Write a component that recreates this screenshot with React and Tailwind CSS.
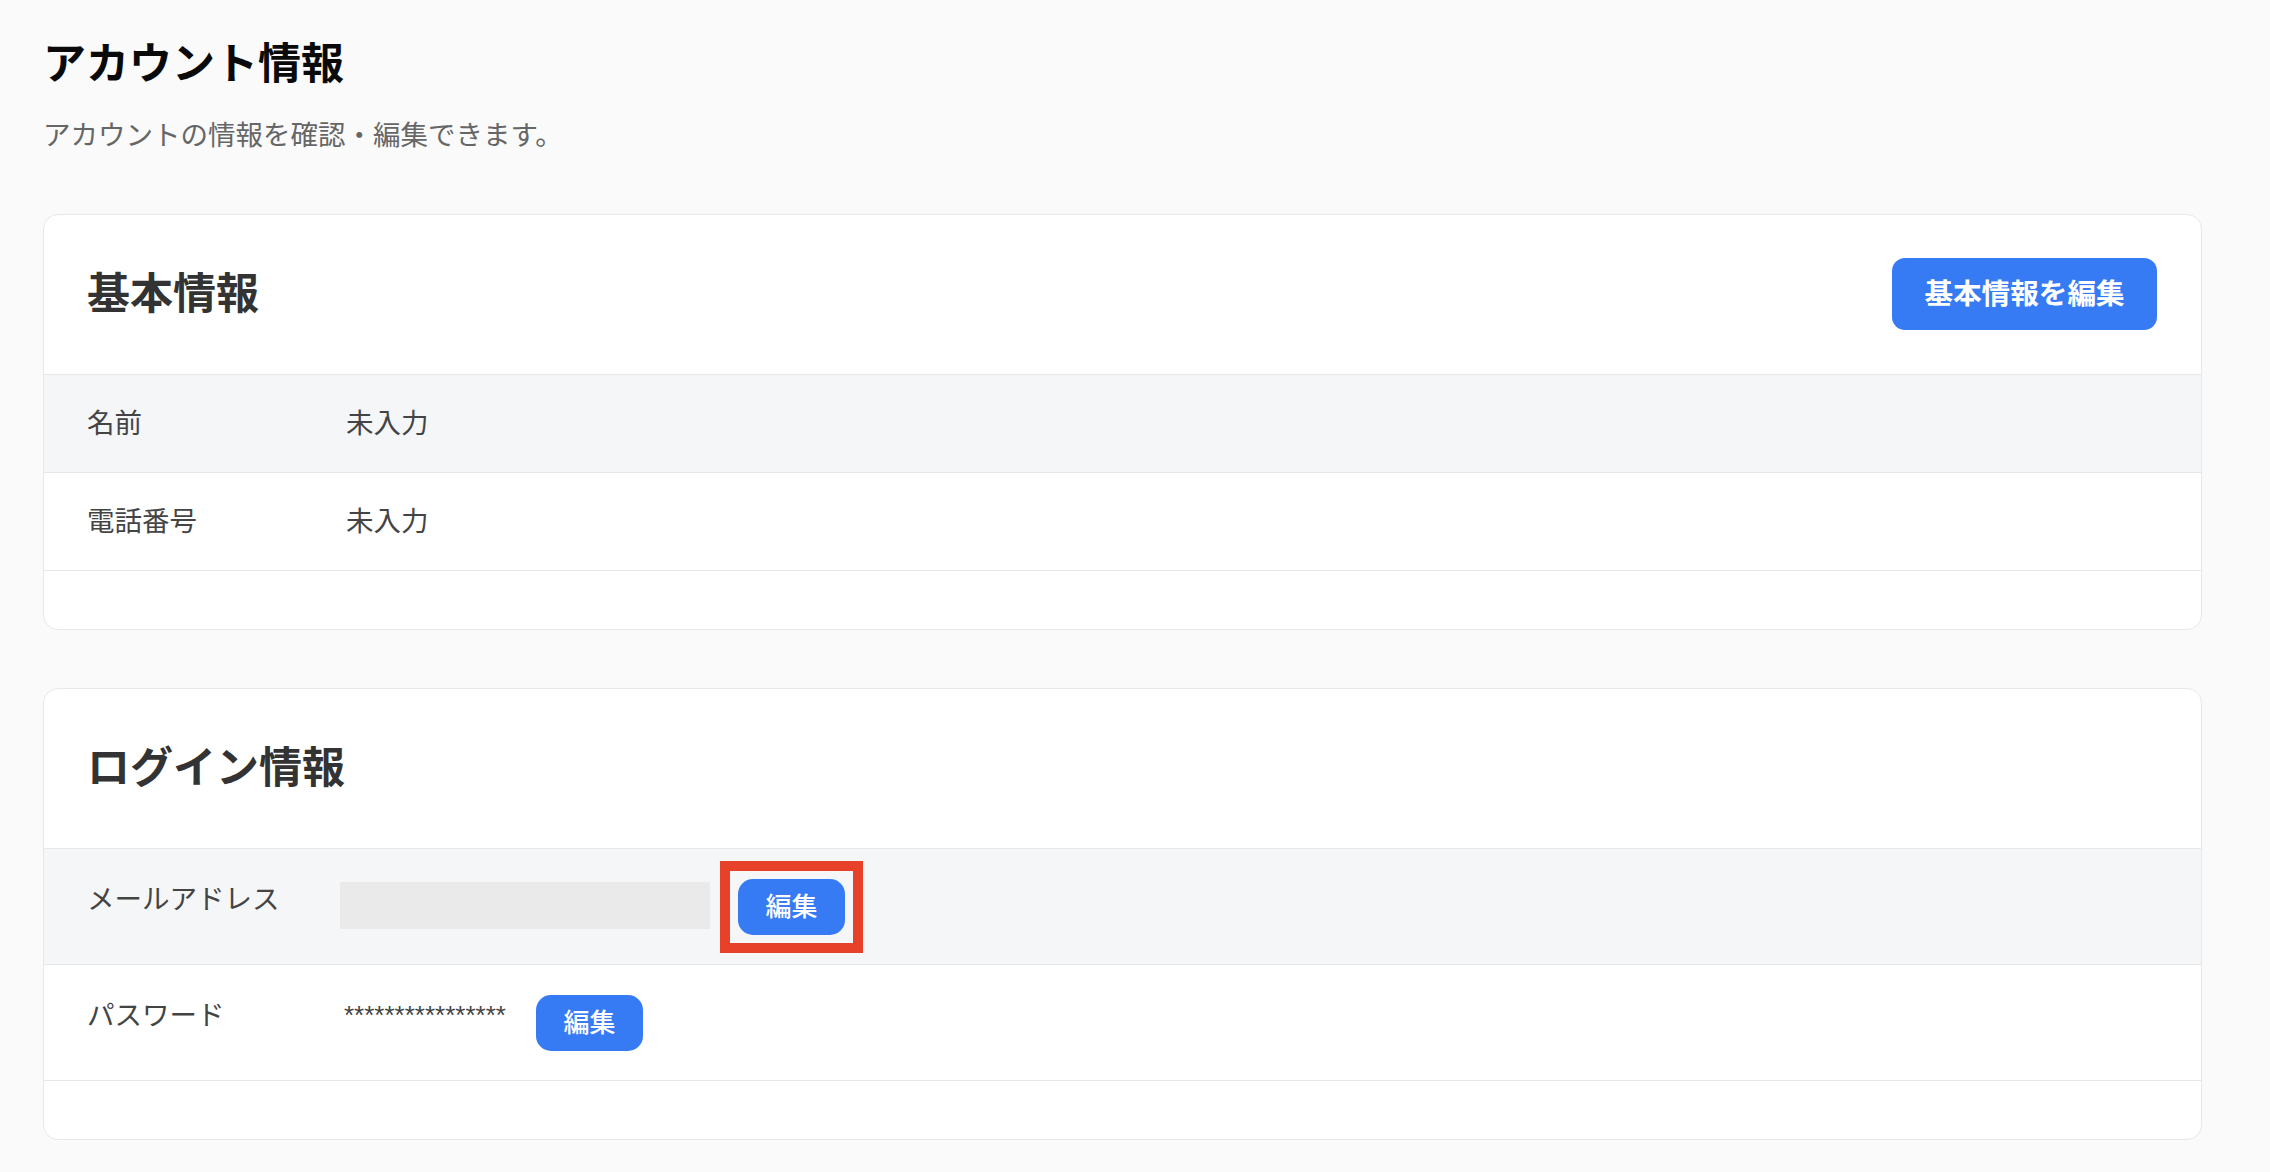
import React from "react"

const rowLabel = "text-[27.5px] leading-[41.25px] text-[#444]"

function EditButton({ highlight }) {
  return (
    <div className="relative shrink-0">
      <button className="w-[107px] h-[56px] rounded-[15px] bg-[#377bf4] text-white text-[26px] font-medium leading-none">
        編集
      </button>
      {/* annotation box */}
      {highlight && (
        <span className="pointer-events-none absolute -inset-[18px] border-[10px] border-[#e8412a]" />
      )}
    </div>
  )
}

export default function App() {
  return (
    <div className="min-h-screen bg-[#fafafa] pl-[43px] pr-[68px] pt-[39px] pb-[34px] font-[family-name:'Liberation_Sans','Noto_Sans_CJK_JP',sans-serif]">

      {/* HEADER */}
      <h1 className="text-[43px] leading-[1.2] font-bold text-[#0a0a0a]">アカウント情報</h1>
      <p className="mt-[24px] text-[27.5px] leading-[41.25px] text-[#666]">
        アカウントの情報を確認・編集できます。
      </p>

      {/* BASIC INFO */}
      <section className="mt-[58px] bg-white border border-[#e8e8e8] rounded-[15px] overflow-hidden">
        <div className="h-[160px] border-b border-[#e6e7e9] flex items-center justify-between pl-[43px] pr-[44px]">
          <h2 className="text-[43px] leading-[1.2] font-bold text-[#333]">基本情報</h2>
          <button className="w-[265px] h-[72px] rounded-[13px] bg-[#377bf4] text-white text-[28.6px] font-bold leading-none">
            基本情報を編集
          </button>
        </div>

        <div className="h-[98px] border-b border-[#e6e7e9] bg-[#f5f6f8] flex items-center pl-[43px]">
          <div className={`w-[259px] ${rowLabel}`}>名前</div>
          <div className={rowLabel}>未入力</div>
        </div>

        <div className="h-[98px] border-b border-[#e6e7e9] flex items-center pl-[43px]">
          <div className={`w-[259px] ${rowLabel}`}>電話番号</div>
          <div className={rowLabel}>未入力</div>
        </div>

        <div className="h-[58px]" />
      </section>

      {/* LOGIN INFO */}
      <section className="mt-[58px] bg-white border border-[#e8e8e8] rounded-[15px] overflow-hidden">
        <div className="h-[160px] border-b border-[#e6e7e9] flex items-center pl-[43px] pr-[44px]">
          <h2 className="text-[43px] leading-[1.2] font-bold text-[#333]">ログイン情報</h2>
        </div>

        <div className="h-[116px] border-b border-[#e6e7e9] bg-[#f5f6f8] flex items-start pl-[43px] pt-[30px]">
          <div className={`w-[253px] ${rowLabel}`}>メールアドレス</div>
          <div className="flex items-start gap-[28px]">
            <div className="mt-[3px] w-[370px] h-[47px] bg-[#eaeaea]" />
            <EditButton highlight />
          </div>
        </div>

        <div className="h-[116px] border-b border-[#e6e7e9] flex items-start pl-[43px] pt-[30px]">
          <div className={`w-[253px] ${rowLabel}`}>パスワード</div>
          <div className="flex items-start gap-[30px]">
            <span className="ml-[4px] text-[26px] leading-[41.25px] text-[#444]">****************</span>
            <EditButton />
          </div>
        </div>

        <div className="h-[58px]" />
      </section>

    </div>
  )
}
